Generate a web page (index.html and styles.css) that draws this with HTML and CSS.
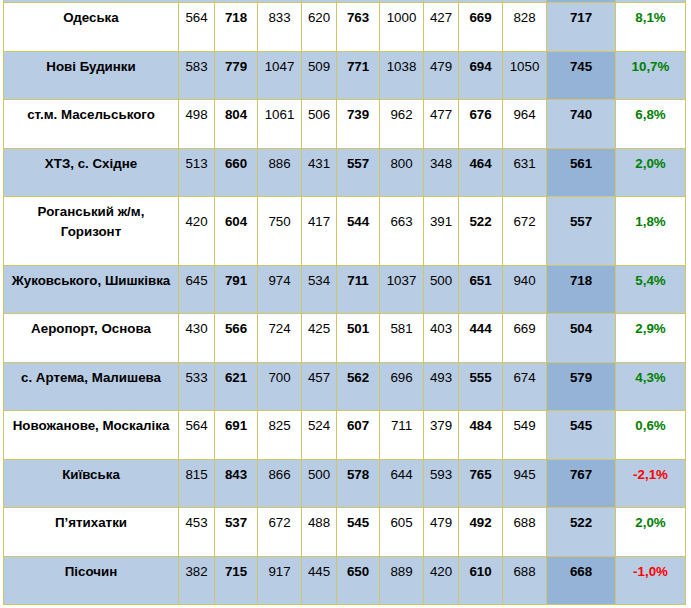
FILE: index.html
```html
<!DOCTYPE html>
<html lang="uk">
<head>
<meta charset="utf-8">
<title>Таблиця</title>
<link rel="stylesheet" href="styles.css">
</head>
<body>
<div class="wrap">
<table class="grid">
<colgroup>
<col class="c-name"><col class="c-n36"><col class="c-n43"><col class="c-n44"><col class="c-n35"><col class="c-n43"><col class="c-n44"><col class="c-n35"><col class="c-n44"><col class="c-n44"><col class="c-avg"><col class="c-pct">
</colgroup>
<tbody>
<tr class="cut blue"><td></td><td></td><td></td><td></td><td></td><td></td><td></td><td></td><td></td><td></td><td class="avg"></td><td></td></tr>
<tr><td class="name">Одеська</td><td>564</td><td class="b">718</td><td>833</td><td>620</td><td class="b">763</td><td>1000</td><td>427</td><td class="b">669</td><td>828</td><td class="avg">717</td><td class="pct up">8,1%</td></tr>
<tr class="blue"><td class="name">Нові Будинки</td><td>583</td><td class="b">779</td><td>1047</td><td>509</td><td class="b">771</td><td>1038</td><td>479</td><td class="b">694</td><td>1050</td><td class="avg">745</td><td class="pct up">10,7%</td></tr>
<tr><td class="name">ст.м. Масельського</td><td>498</td><td class="b">804</td><td>1061</td><td>506</td><td class="b">739</td><td>962</td><td>477</td><td class="b">676</td><td>964</td><td class="avg">740</td><td class="pct up">6,8%</td></tr>
<tr class="blue"><td class="name">ХТЗ, с. Східне</td><td>513</td><td class="b">660</td><td>886</td><td>431</td><td class="b">557</td><td>800</td><td>348</td><td class="b">464</td><td>631</td><td class="avg">561</td><td class="pct up">2,0%</td></tr>
<tr><td class="name">Роганський ж/м,<br>Горизонт</td><td>420</td><td class="b">604</td><td>750</td><td>417</td><td class="b">544</td><td>663</td><td>391</td><td class="b">522</td><td>672</td><td class="avg">557</td><td class="pct up">1,8%</td></tr>
<tr class="blue"><td class="name">Жуковського, Шишківка</td><td>645</td><td class="b">791</td><td>974</td><td>534</td><td class="b">711</td><td>1037</td><td>500</td><td class="b">651</td><td>940</td><td class="avg">718</td><td class="pct up">5,4%</td></tr>
<tr><td class="name">Аеропорт, Основа</td><td>430</td><td class="b">566</td><td>724</td><td>425</td><td class="b">501</td><td>581</td><td>403</td><td class="b">444</td><td>669</td><td class="avg">504</td><td class="pct up">2,9%</td></tr>
<tr class="blue"><td class="name">с. Артема, Малишева</td><td>533</td><td class="b">621</td><td>700</td><td>457</td><td class="b">562</td><td>696</td><td>493</td><td class="b">555</td><td>674</td><td class="avg">579</td><td class="pct up">4,3%</td></tr>
<tr><td class="name">Новожанове, Москаліка</td><td>564</td><td class="b">691</td><td>825</td><td>524</td><td class="b">607</td><td>711</td><td>379</td><td class="b">484</td><td>549</td><td class="avg">545</td><td class="pct up">0,6%</td></tr>
<tr class="blue"><td class="name">Київська</td><td>815</td><td class="b">843</td><td>866</td><td>500</td><td class="b">578</td><td>644</td><td>593</td><td class="b">765</td><td>945</td><td class="avg">767</td><td class="pct down">-2,1%</td></tr>
<tr><td class="name">П’ятихатки</td><td>453</td><td class="b">537</td><td>672</td><td>488</td><td class="b">545</td><td>605</td><td>479</td><td class="b">492</td><td>688</td><td class="avg">522</td><td class="pct up">2,0%</td></tr>
<tr class="blue"><td class="name">Пісочин</td><td>382</td><td class="b">715</td><td>917</td><td>445</td><td class="b">650</td><td>889</td><td>420</td><td class="b">610</td><td>688</td><td class="avg">668</td><td class="pct down">-1,0%</td></tr>
</tbody>
</table>
</div>
</body>
</html>
```
FILE: styles.css
```css
html, body {
  margin: 0;
  padding: 0;
  background: #ffffff;
}

.wrap {
  padding-left: 3px;
  height: 608px;
  overflow: hidden;
}

.grid {
  border-collapse: collapse;
  table-layout: fixed;
  width: 683px;
  font-family: "Liberation Sans", Arial, sans-serif;
  font-size: 13.33px;
  line-height: 20px;
  color: #000000;
}

.c-name { width: 175px; }
.c-n36 { width: 36px; }
.c-n43 { width: 43px; }
.c-n44 { width: 44px; }
.c-n35 { width: 35px; }
.c-avg { width: 69px; }
.c-pct { width: 70px; }

.grid td {
  border: 1px solid #cfc667;
  padding: 5px 0 22.5px;
  height: 20px;
  text-align: center;
  vertical-align: middle;
  background: #ffffff;
  white-space: nowrap;
  overflow: hidden;
}

.grid tr.blue td {
  background: #b8cce4;
}

.grid td.avg {
  background: #b8cce4;
  font-weight: bold;
}

.grid tr.blue td.avg {
  background: #95b3d7;
}

.grid td.name,
.grid td.b,
.grid td.pct {
  font-weight: bold;
}

.grid td.up { color: #008000; }
.grid td.down { color: #ff0000; }

.grid tr.cut td {
  border-top: 0;
  padding: 0;
  height: 2px;
  line-height: 2px;
}
```
